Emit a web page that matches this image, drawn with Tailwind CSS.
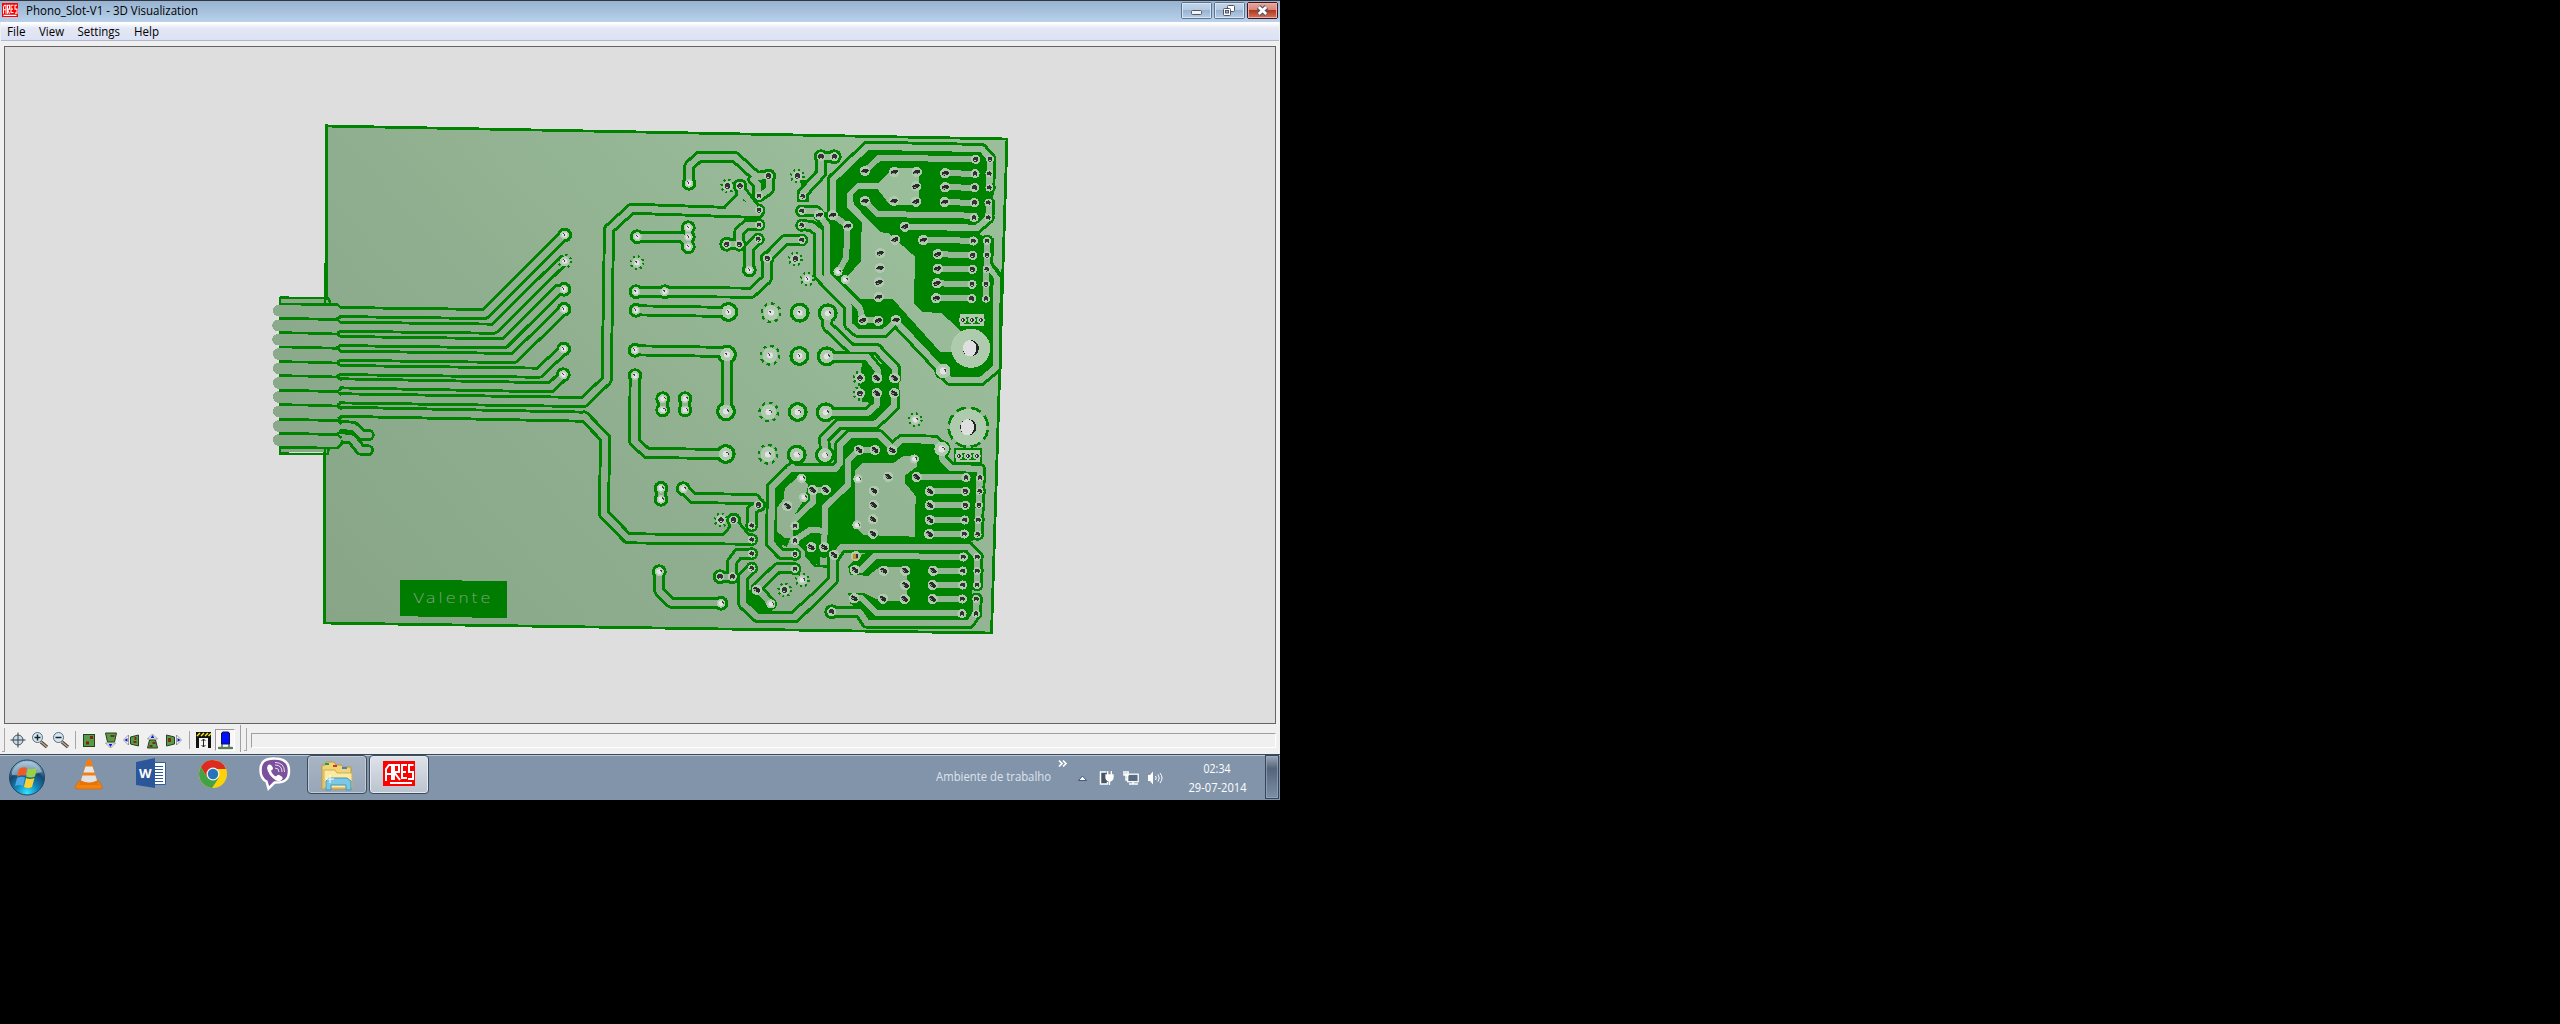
<!DOCTYPE html>
<html lang="pt">
<head>
<meta charset="utf-8">
<title>Phono_Slot-V1 - 3D Visualization</title>
<script src="https://cdn.jsdelivr.net/npm/@tailwindcss/browser@4"></script>
</head>
<body class="bg-black overflow-hidden">
<div class="w-[1280px] h-[800px] flex flex-col bg-[#f0f0f0] font-['Open_Sans','Noto_Sans',sans-serif] text-black overflow-hidden">
  <header class="h-[22px] shrink-0 border-t border-[#33373d] bg-linear-to-b from-[#97b3d1] to-[#b9d1ea] flex items-start">
    <svg class="ml-[2px] mt-[2px] shrink-0" width="16" height="14" viewBox="0 0 32 25" preserveAspectRatio="none"><rect width="32" height="25" fill="#f00"/><path d="M3 19V7l2-3h3v15M3 12h5M11 19V4h4v7h-4l4 8M23 4h-5v13h5M18 11h4M30 4h-4v7h4v7h-4M3 22h26" fill="none" stroke="#fff" stroke-width="2"/></svg>
    <h1 class="ml-[8px] shrink-0"><svg width="180" height="21" class="block"><text x="0" y="14" textLength="172" lengthAdjust="spacingAndGlyphs" font-size="12.5">Phono_Slot-V1 - 3D Visualization</text></svg></h1>
    <div class="ml-auto mr-[2px] mt-px flex gap-[2px]">
      <svg width="31" height="17"><defs><linearGradient id="wb" x2="0" y2="1"><stop stop-color="#c3d5e9"/><stop offset=".45" stop-color="#b4cae2"/><stop offset=".5" stop-color="#98b3d0"/><stop offset="1" stop-color="#b7d0ea"/></linearGradient><linearGradient id="wr" x2="0" y2="1"><stop stop-color="#e8a89d"/><stop offset=".45" stop-color="#d5887a"/><stop offset=".5" stop-color="#b5371f"/><stop offset="1" stop-color="#d17a62"/></linearGradient></defs><rect x=".5" y=".5" width="30" height="16" rx="1.5" fill="url(#wb)" stroke="#5d7392"/><rect x="1.5" y="1.5" width="28" height="14" fill="none" stroke="#d6e3f1"/><rect x="10.5" y="8.5" width="10" height="4" rx="1" fill="#f4f4f4" stroke="#535666"/></svg>
      <svg width="31" height="17"><rect x=".5" y=".5" width="30" height="16" rx="1.5" fill="url(#wb)" stroke="#5d7392"/><rect x="1.5" y="1.5" width="28" height="14" fill="none" stroke="#d6e3f1"/><rect x="13.500" y="3.500" width="7" height="6" rx="1" fill="#fff" stroke="#535666"/><rect x="9.500" y="6.500" width="7" height="7" rx="1" fill="#fff" stroke="#535666"/><rect x="11.500" y="8.500" width="3" height="2.500" fill="#9bb5d2" stroke="#535666"/></svg>
      <svg width="31" height="17"><rect x=".5" y=".5" width="30" height="16" rx="1.5" fill="url(#wr)" stroke="#43141b"/><rect x="1.5" y="1.5" width="28" height="14" fill="none" stroke="#e7b0a6"/><path d="M11.500 5l8 7M19.500 5l-8 7" stroke="#535666" stroke-width="5"/><path d="M11.800 5l7.400 7M19.200 5l-7.400 7" stroke="#fff" stroke-width="2.700"/></svg>
    </div>
  </header>
  <nav class="h-[19px] shrink-0 border-b border-[#b3b7cb] bg-linear-to-b from-white from-5% via-[#e4e8f4] via-35% to-[#dce2f6] mx-px">
    <svg width="180" height="18" class="block" font-size="12.5"><text x="6" y="14" textLength="18.500" lengthAdjust="spacingAndGlyphs">File</text><text x="38" y="14" textLength="25" lengthAdjust="spacingAndGlyphs">View</text><text x="76.500" y="14" textLength="42.500" lengthAdjust="spacingAndGlyphs">Settings</text><text x="133" y="14" textLength="25" lengthAdjust="spacingAndGlyphs">Help</text></svg>
  </nav>
  <main class="h-[678px] mt-[5px] ml-[4px] mr-[4px] shrink-0 border border-[#646464] bg-[#dedede] overflow-hidden">
    <svg id="board" class="block" width="1270" height="676" viewBox="5 47 1270 676" shape-rendering="crispEdges"></svg>
  </main>
  <section class="h-[30px] shrink-0 flex items-start pt-[3px]">
    <i class="block w-[3px] h-[24px] ml-[2px] mt-px border-r border-b border-[#a8a8a8]"></i>
    <div class="flex items-center h-[25px] ml-[2px]">
      <svg width="22" height="20" viewBox="-11 -10 22 20"><circle r="5" fill="#c9dce6" stroke="#44525c"/><path d="M-7.500 0h15M0-7.500v15" stroke="#35434c"/></svg>
      <svg width="22" height="20" viewBox="0 0 22 20"><path d="M12 12l6 5" stroke="#4c4035" stroke-width="3.500"/><path d="M12 12l6 5" stroke="#b7a58d" stroke-width="1.500"/><circle cx="8.500" cy="7.500" r="5" fill="#d3e8f3" stroke="#5b6c78"/><path d="M5.500 7.500h6M8.500 4.500v6" stroke="#17222a" stroke-width="1.500"/></svg>
      <svg width="22" height="20" viewBox="0 0 22 20"><path d="M11 12l6 5" stroke="#4c4035" stroke-width="3.500"/><path d="M11 12l6 5" stroke="#b7a58d" stroke-width="1.500"/><circle cx="7.500" cy="7.500" r="5" fill="#d3e8f3" stroke="#5b6c78"/><path d="M4.500 7.500h6" stroke="#17222a" stroke-width="1.500"/></svg>
      <i class="block w-px h-[18px] mx-[2px] bg-[#a5a5a5]"></i>
      <svg width="22" height="20" viewBox="-11 -10 22 20"><rect x="-5.500" y="-5.500" width="11" height="12" fill="#579b47" stroke="#24421f"/><path d="M1-2.500h3M-3 3h3" stroke="#8b1d16" stroke-width="3"/></svg>
      <svg width="21" height="20" viewBox="-10.500 -10 21 20"><path d="M-5-7H6L4 2h-7z" fill="#579b47" stroke="#24421f"/><path d="M0-4h4" stroke="#7d2a1b" stroke-width="2"/><path d="M-5 3h10L0 8z" fill="#fff" stroke="#737373" stroke-width=".7"/><path d="M-2 4h4L0 7z" fill="#0719d6"/></svg>
      <svg width="21" height="20" viewBox="-10.500 -10 21 20"><path d="M-1-3l8-2V6l-8-2z" fill="#579b47" stroke="#24421f"/><path d="M4-3v3M2 2h3" stroke="#7d2a1b" stroke-width="2"/><path d="M-3-5V5l-5-5z" fill="#fff" stroke="#737373" stroke-width=".7"/><path d="M-4-2v4L-7 0z" fill="#0719d6"/></svg>
      <svg width="21" height="20" viewBox="-10.500 -10 21 20"><path d="M-3 0h6l2 8H-5z" fill="#579b47" stroke="#24421f"/><path d="M0 3h3M-3 6h3" stroke="#7d2a1b" stroke-width="2"/><path d="M-5-1H5L0-6z" fill="#fff" stroke="#737373" stroke-width=".7"/><path d="M-2-2h4L0-5z" fill="#0719d6"/></svg>
      <svg width="21" height="20" viewBox="-10.500 -10 21 20"><path d="M1-3l-8-2V6l8-2z" fill="#579b47" stroke="#24421f"/><path d="M-4-2v4" stroke="#7d2a1b" stroke-width="3"/><path d="M3-5V5l5-5z" fill="#fff" stroke="#737373" stroke-width=".7"/><path d="M4-2v4L7 0z" fill="#0719d6"/></svg>
      <i class="block w-px h-[18px] ml-[5px] mr-[5px] bg-[#a5a5a5]"></i>
      <svg width="17" height="20" viewBox="0 0 17 20"><path d="M1 2h15v16h-3V8H4v10H1z" fill="#111"/><rect x="4" y="8" width="9" height="10" fill="#f4f4f4"/><path d="M2 6l3-3M6 6l3-3M10 6l3-3M13.500 6L16 3.500" stroke="#f3e516" stroke-width="1.500"/><path d="M8.500 9v8M6.500 11l2-2 2 2M6.500 15l2 2 2-2" stroke="#222" fill="none"/></svg>
      <span class="block w-[20px] h-[22px] ml-[3px] border border-r-white border-b-white border-[#9a9a9a] bg-[#f9f7f8]"><svg width="18" height="20"><path d="M5.500 4V3h1V2h6v1h1v11h-8z" fill="#0010ff" stroke="#10104b"/><path d="M6 14v3M13 14v3" stroke="#10104b"/><path d="M2.500 17.300h14v1.400h-14z" fill="#68a84d" stroke="#34602c" stroke-width=".8"/></svg></span>
    </div>
    <i class="block w-px h-[27px] -mt-[2px] ml-[5px] bg-[#a0a0a0]"></i>
    <i class="block w-[3px] h-[23px] ml-[3px] mt-px border-r border-b border-[#a8a8a8]"></i>
    <i class="block flex-1 h-[15px] ml-[4px] mr-[4px] mt-[6px] border-t border-l border-t-[#a0a0a0] border-l-[#a0a0a0] border-b border-r border-b-white border-r-white"></i>
  </section>
  <footer class="h-[46px] shrink-0 border-t border-[#37495b] bg-[#8294aa] shadow-[inset_0_1px_0_#b9c8d7] flex items-start text-white">
    <svg class="ml-[8px] mt-[2px] mr-[12px] shrink-0" width="38" height="40"><defs><radialGradient id="orb" cy=".95" r=".9"><stop stop-color="#36e5ff"/><stop offset=".35" stop-color="#1189bd"/><stop offset=".7" stop-color="#17476d"/><stop offset="1" stop-color="#8fb4cc"/></radialGradient></defs><circle cx="19" cy="20.500" r="17.500" fill="url(#orb)" stroke="#1e4568"/><path d="M4 15A16 16 0 0 1 34 15Q20 19 4 18z" fill="#c6dbe8" opacity=".55"/><g transform="translate(0 1)"><path d="M11 11q4-3 8-1l-2 8q-4-2-8 1z" fill="#f05a24"/><path d="M20 10.500q5 2 9-1l-2 9q-4 2-9 0z" fill="#9bd145"/><path d="M9 20q4-2 8-.5L15 28q-4-2-8 0z" fill="#4aa7e8"/><path d="M18 20q4 2 8.500 0l-2.500 9q-4 2-8 0z" fill="#ffd12e"/></g></svg>
    <div class="flex items-start">
      <span class="w-[62px] h-[38px] flex justify-center pt-[3px]"><svg width="30" height="34"><path d="M5 23L1 29q0 2 3 2h22q3 0 2-2l-3-6z" fill="#f5820d" stroke="#d56708" stroke-width=".8"/><path d="M5 27h20l-4-7H8z" fill="#e77405"/><path d="M13 2q2-2 4 0l6 20q-8 5-16 0z" fill="#f47f10"/><path d="M11.500 8.500h7l2 6h-11z" fill="#e5e8ea"/><path d="M8.500 17.500h13l1.500 5q-8 4-16 0z" fill="#dfe3e6"/></svg></span>
      <span class="w-[62px] h-[38px] flex justify-center pt-[3px]"><svg width="31" height="32"><path d="M17 4.500h12.500v22H17" fill="#fff" stroke="#355e9e"/><path d="M19 8.500h8M19 11.500h8M19 14.500h8M19 17.500h8M19 20.500h8M19 23.500h8" stroke="#2d589a"/><path d="M0 4L19 0v30L0 27z" fill="#2b579a"/><text x="9.300" y="20" text-anchor="middle" font-size="13" font-weight="700" fill="#fff">W</text></svg></span>
      <span class="w-[62px] h-[38px] flex justify-center pt-[4px]"><svg width="30" height="30" viewBox="-15 -15 30 30"><circle r="14" fill="#fcd209"/><path d="M-12.100-7A14 14 0 0 1 13-5H0L-6 3z" fill="#dc2b23"/><path d="M-12.100-7A14 14 0 0 0-1 14L6 3.500 0 6-6 3z" fill="#42a346"/><circle r="6.500" fill="#f2f2ef"/><circle r="5.200" fill="#2674ba"/></svg></span>
      <span class="w-[62px] h-[38px] flex justify-center pt-[2px]"><svg width="32" height="34"><path d="M16 1.500C5 1 1.500 6 1.500 13c0 5 1 9 6 11.500l2 7 6-6C27 26 30 21 30 14c0-8-4-12.500-14-12.500z" fill="#7b519d" stroke="#fff" stroke-width="2.500"/><path d="M9 8q3-2 5 3 0 2-2 2.500 1 4 5 6 2-3 4-1 4 2 2 4-2 3-6 1Q9 18 8 11z" fill="#fff"/><path d="M16 11q4 0 4 4M16 8q7 0 7 7M16 5.500q9.500 0 9.500 9.500" stroke="#e6dbef" fill="none"/></svg></span>
      <span class="w-[60px] h-[39px] ml-px rounded-sm border border-[#3d4b5b] bg-linear-to-b from-[#a8b5c4] to-[#97a6b8] shadow-[inset_0_0_0_1px_#c1cad5] flex justify-center pt-[4px]"><svg width="34" height="32"><path d="M2 9V5h3l1-3h8l2 3h6l1 2h8v22H2z" fill="#f0d477" stroke="#bf963f"/><path d="M4 10h11l2 3h15v15H4z" fill="#fbeaa1" stroke="#cfad51"/><path d="M5 4h4" stroke="#15a53a" stroke-width="2"/><path d="M13 6h4" stroke="#c43d28" stroke-width="2"/><path d="M22 8h5" stroke="#3687d6" stroke-width="2"/><path d="M6 30v-9l3-3h18l4 3v9h-5v-5H11v5z" fill="#7ac8e6" stroke="#4695bc"/><path d="M6 19h8M10 15v8" stroke="#fff"/></svg></span>
      <span class="w-[60px] h-[39px] ml-[2px] rounded-sm border border-[#3d4b5b] bg-linear-to-b from-[#dfe3e9] to-[#bac3cf] shadow-[inset_0_0_0_1px_#e6eaf0] flex justify-center pt-[5px]"><svg width="32" height="25"><rect width="32" height="25" fill="#f00"/><path d="M3 20V8l3-4h3v15M4 13h5M11 19V4h5v7h-5l6 8M24 4h-5v13h5M19 11h4M30.500 4H26v7h4v7h-5M7 22h22" fill="none" stroke="#fff" stroke-width="2"/></svg></span>
    </div>
    <svg class="ml-auto shrink-0" width="345" height="45">
      <text x="1" y="26" textLength="115" lengthAdjust="spacingAndGlyphs" font-size="12.500" fill="#dde3ea">Ambiente de trabalho</text>
      <path d="M124 5.500l3 3-3 3M128 5.500l3 3-3 3" fill="none" stroke="#fff" stroke-width="1.700"/>
      <path d="M143.500 25.500l4-4.500 4 4.500z" fill="#fff" stroke="#3c4a72" stroke-width=".9"/>
      <g transform="translate(164 16)"><path d="M7.500 1h-6v12h7v-2" fill="#485565" stroke="#fff" stroke-width="1.500"/><path d="M7 4h7v3q-1 3-3.500 3T7 7zM8.700 0v4M12.300 0v4M10.500 9v5" fill="#fff" stroke="#fff" stroke-width="1.300"/></g>
      <g transform="translate(188 16)"><rect x="4.700" y="3.200" width="10.500" height="7.500" fill="#5a6c81" stroke="#fff" stroke-width="1.300"/><path d="M6 13h9M10 11v2M1 0v4h4V0M3 0v9h2" fill="none" stroke="#fff" stroke-width="1.500"/></g>
      <g transform="translate(212 16)"><path d="M1 4h2l3-3.500v13L3 10H1z" fill="#fff"/><path d="M8.500 5q1.500 2 0 4M11 3.500q2.500 3.500 0 7M13 2q4 5 0 10" fill="none" stroke="#fff"/></g>
      <text x="268.500" y="18" textLength="27" lengthAdjust="spacingAndGlyphs" font-size="12.500" fill="#fff">02:34</text>
      <text x="253.500" y="37" textLength="58" lengthAdjust="spacingAndGlyphs" font-size="12.500" fill="#fff">29-07-2014</text>
      <defs><linearGradient id="sd" x2="0" y2="1"><stop stop-color="#9eabba"/><stop offset=".3" stop-color="#54657a"/><stop offset="1" stop-color="#7d90a7"/></linearGradient></defs>
      <rect x="330.500" y=".5" width="13" height="43" fill="url(#sd)" stroke="#35465a"/><rect x="331.500" y="1.500" width="11" height="41" fill="none" stroke="#a0adbc" opacity=".6"/>
    </svg>
  </footer>
</div>
<script>
// Panels of the board, each with its own origin; units are thirds of a pixel.
const O={A:[260,110],B:[580,130],C:[780,125],D:[580,380],E:[780,370]};
const P=(k,s)=>s.trim().split(/\s+/).map(q=>{const [x,y]=q.split(',').map(Number);return [O[k][0]+x/3,O[k][1]+y/3].map(v=>v.toFixed(1)).join(',')}).join(' ');
const G='#008300';
const poly=(k,s,f)=>`<polygon points="${P(k,s)}" fill="${f}"/>`;
const line=(k,s,c,w)=>`<polyline points="${P(k,s)}" fill="none" stroke="${c}" stroke-width="${w}" stroke-linejoin="round" stroke-linecap="round"/>`;
const BD='url(#bd)';

const fills=[
 ['C','150,160 258,52 605,58 642,98 642,205 600,330 642,340 640,415 632,460 635,720 595,750 505,750 345,605 310,630 232,632 200,595 200,545 112,450 112,300 118,262 150,260'],
 ['C','250,735 355,735 358,830 245,830'],
 ['E','245,-20 358,-15 358,75 343,110 290,180 180,180 230,140 275,110 240,70'],
 ['E','-10,325 40,275 160,300 190,215 290,205 335,245 370,218 460,220 500,300 612,300 612,500 570,515 180,515 165,555 130,565 110,555 70,540 30,500 0,420'],
 ['E','240,555 285,540 560,540 575,570 575,740 275,748 210,700 205,670 250,668 300,692 380,692 380,590 300,590 265,617 210,615 205,590'],
 ['D','500,635 520,625 580,675 575,705 540,705 500,670'],
 ['D','588,325 640,275 720,275 720,560 690,540 640,455 620,500 590,488'],
 ['B','660,150 690,150 690,165 665,170'],
];
// Bare areas inside the copper pours.
const opens=[
 ['C','202,205 232,175 295,175 340,130 418,130 418,240 330,240 293,193 235,193 219,210 221,238 300,321 326,325 405,395 402,535 425,560 485,565 545,620 520,680 480,680 338,522 243,522 190,470 205,450 243,410 245,292 202,247'],
 ['E','225,300 248,280 340,280 370,258 415,258 410,290 376,316 376,340 407,378 404,500 250,495 225,470'],
 ['E','58,318 14,355 12,385 -8,412 -8,485 15,505 40,505 40,440 75,385 85,345'],
];
// Tracks: panel and points.
const T=[
 ['A','235,606 674,612 912,376'],['A','235,650 702,656 905,456'],['A','235,693 733,700 893,540 912,540'],
 ['A','235,737 762,744 912,598'],['A','235,780 838,788 912,717'],['A','235,820 873,832 912,794'],
 ['A','235,865 972,876'],['A','235,905 972,920'],
 ['A','235,948 280,950 305,975 326,975'],['A','235,980 276,986 302,1019 324,1021'],
 ['B','12,816 80,750 87,298 155,236 535,249'],['B','445,240 482,203 482,168'],['B','482,180 530,242'],
 ['D','12,109 75,173 72,402 143,475 515,479'],['D','440,473 461,448 461,420'],['D','461,430 500,477'],
 ['B','327,160 328,108 356,81 465,81 530,140 566,138'],['B','535,198 535,165 520,148 530,140'],['B','566,138 566,180 538,198'],
 ['B','172,320 305,320 325,340'],['B','325,293 325,350'],
 ['B','537,285 500,285 478,305 478,343 440,343'],['B','535,328 508,352 508,420'],
 ['B','665,330 615,330 562,385 560,447 515,488 168,485'],
 ['B','168,541 445,546'],['B','165,661 440,666 440,840'],
 ['B','165,737 164,930'],['D','164,0 162,183 200,219 437,222'],
 ['D','248,56 248,90'],['D','315,56 315,90'],['D','243,325 243,358'],
 ['D','310,326 338,354 525,357 538,375 515,390 515,437'],
 ['D','515,521 475,521 457,545 457,590 420,590'],
 ['D','238,575 238,633 273,668 423,670'],
 ['D','515,565 490,590 490,672 533,712 640,712 702,655'],
 ['D','645,565 592,565 530,625 573,672'],
 ['D','645,523 605,523 573,490 576,320 637,262'],
 ['E','30,297 165,297 180,280 180,225 210,195 297,195 337,234 365,210 465,212 485,237 485,265 512,293 600,297 599,323 593,493'],
 ['C','123,95 163,95'],['C','123,95 123,145 68,205 68,214'],
 ['C','67,258 108,258 118,270 140,300 140,450 240,550 248,585'],
 ['C','65,300 95,303 118,322 118,452 208,545 208,600 232,620 312,622 347,588 490,740 508,764 602,766 647,728 650,455 621,420 621,348'],
 ['C','158,270 158,164 262,65 605,72 630,100 628,188'],
 ['C','628,233 625,280 592,308 374,306'],
 ['C','143,565 142,603 215,672 290,672 345,730 345,760'],['C','140,696 262,697 293,735 292,760'],
 ['E','137,129 262,130 290,105 290,70'],['E','135,255 133,205 175,163 285,163 343,108 343,70'],
 ['E','45,742 158,632 158,570 185,530 565,530 592,560 592,645'],
 ['E','590,687 588,730 568,760 260,758 240,727 155,725'],
];
// Tracks inside a pour, which need no outline.
const I=[
 ['C','255,138 298,98 587,103'],['C','496,145 585,146'],['C','496,187 585,188'],['C','494,231 583,234'],
 ['C','255,228 292,267 583,272'],['C','430,345 580,347'],['C','473,388 578,390'],['C','473,431 578,433'],['C','471,475 576,478'],['C','469,520 575,520'],
 ['C','158,270 203,303 198,400 175,440'],['C','248,585 295,587'],['C','618,430 618,520'],['C','621,348 618,520'],
 ['E','237,240 285,240'],['E','237,240 205,270 205,345 135,410 133,530'],['E','410,321 558,321'],['E','450,364 556,364'],['E','450,406 556,406'],['E','450,450 554,450'],['E','448,492 553,492'],
 ['E','98,360 137,360'],['E','100,360 100,395 42,450 45,468'],['E','45,510 90,480 133,482'],
 ['E','225,600 243,600 285,558 550,561'],['E','223,685 245,685 290,729 547,730'],['E','460,602 548,602'],['E','458,645 548,645'],['E','458,687 548,687'],
 ['E','599,323 593,493'],
];
// Pads. r: ringed, b: large ringed, t: thermal, u: large thermal, p: plain in a pour, s: small; the third field marks a shaded hole.
const pads=[
 ['A','r',0,'914,375 912,538 912,598 911,717 910,794'],['A','t',0,'914,454'],
 ['B','r',0,'327,160 172,320 325,293 325,321 325,350 508,420 168,485 254,485 168,541 165,661 165,737'],
 ['B','r',1,'566,138 480,168 478,343 440,343 562,385'],['B','t',1,'443,168 652,138 646,387'],['B','t',0,'171,398 682,447'],
 ['B','s',1,'537,198 537,241 537,285 535,328 665,243 665,286 665,330'],['B','b',0,'445,546 659,548 441,674 658,678'],['B','u',0,'573,548 570,676'],
 ['C','r',1,'123,95 163,95'],['C','q',1,'68,214'],
 ['C','s',1,'630,103 628,146 628,188 625,233 625,278 621,348 621,391 620,433 618,478 618,521'],
 ['C','b',0,'143,565 140,694'],
 ['C','p',1,'255,138 343,141 410,141 408,184 408,230 342,228 255,228 496,145 496,187 494,231 375,305 345,344 430,345 301,385 300,429 297,472 296,516 473,388 473,431 471,475 469,520 158,270 118,270 203,303 248,586 295,587 348,585'],
 ['C','m',1,'587,103 585,146 584,188 583,233 582,278 580,348 578,391 577,433 576,478 575,521'],['C','m',0,'174,440 196,464'],
 ['C','P',0,'490,738'],['C','t',1,'241,760'],['C','p',1,'292,760 345,760'],
 ['D','r',0,'248,56 248,90 315,56 315,90 243,325 243,358 310,326 238,575 423,670'],
 ['D','b',0,'438,94 437,222 653,96 650,224'],['D','u',0,'566,96 564,223'],
 ['D','r',1,'536,375 461,420 457,590 420,590'],['D','t',1,'423,420 614,630'],['D','t',0,'667,600'],
 ['D','s',1,'515,437 515,479 515,521 515,565 645,523 645,567'],['D','m',0,'665,295 671,352 573,672'],['D','p',1,'622,378 698,331 694,502 530,629'],['D','m',1,'645,438 645,482'],
 ['E','b',0,'137,127 135,255'],['E','t',1,'240,24 240,70'],['E','p',1,'290,24 343,24 290,70 343,70'],['E','t',0,'406,149'],
 ['E','p',1,'237,240 285,240 337,241 325,320 282,362 281,405 279,448 279,491 410,321 450,364 450,406 450,450 448,492 98,360 137,360 133,532 162,555 225,600 311,602 376,602 376,645 374,687 309,686 223,685 460,602 458,645 458,687'],
 ['E','r',1,'155,725'],
 ['E','m',0,'403,267 234,327 231,465'],['E','P',0,'485,237'],
 ['E','m',1,'558,323 556,364 556,406 554,450 553,492 550,561 548,603 548,645 547,687 546,731'],
 ['E','s',1,'600,323 599,364 597,406 595,450 593,493 592,561 592,603 591,645 589,687 588,731'],
];
const LP='#aecbae';
const size={r:[7.400,4.500,2.700],t:[7.300,5,2.700],b:[10,6.800,3],u:[10.300,7.500,3],s:[6.500,3.900,2.400],q:[6,3.800,2.400],p:[6.200,5.200,2.500],m:[5,4.600,2.500],P:[9,7.300,3.500]};
let h=`<defs><linearGradient id="bd" gradientUnits="userSpaceOnUse" x1="330" y1="620" x2="860" y2="160"><stop stop-color="#88a588"/><stop offset=".45" stop-color="#8fae8f"/><stop offset="1" stop-color="#9abd9a"/></linearGradient></defs>`;
h+=`<polygon points="279,298 326,298 326,126 1007,139 991,633 324,623 324,452 279,452" fill="${BD}"/><path d="M326.500 298V126L1007 139 991.500 633 324.500 623V452M326.500 124V210L325.500 300" fill="none" stroke="${G}" stroke-width="2.800"/>`;
for(const [k,s] of fills)h+=poly(k,s,G);
for(const [k,s] of T)h+=line(k,s,G,12);
const each=f=>{for(const [k,t,d,s] of pads)for(const q of s.split(' ')){const [x,y]=P(k,q).split(',').map(Number);f(t,d,x,y,size[t],k)}};
each((t,d,x,y,z)=>{if('rbs'.includes(t))h+=`<circle cx="${x}" cy="${y}" r="${z[0]}" fill="${G}"/>`;if(t=='q')h+=`<rect x="${x-6}" y="${y-6}" width="12" height="12" fill="${G}"/>`;if(t=='P')h+=`<circle cx="${x}" cy="${y}" r="9" fill="${G}"/>`});
for(const [k,s] of opens)h+=poly(k,s,BD);
for(const [k,s] of T)h+=line(k,s,BD,6.2);
h+=poly('B','450,243 482,205 530,245',BD)+poly('D','440,476 464,440 505,478',BD);
for(const [k,s] of I)h+=line(k,s,'#95b695',6);
each((t,d,x,y,z,k)=>{
 if(t=='t'||t=='u')h+=`<circle cx="${x}" cy="${y}" r="${z[0]-1}" fill="none" stroke="${G}" stroke-width="2.300" stroke-dasharray="${t=='u'?'3.300 4':'1.900 3.050'}"/>`;
 h+=`<circle cx="${x}" cy="${y}" r="${z[1]}" fill="${LP}"/>`;
 if(!d)h+=`<circle cx="${x}" cy="${y}" r="${z[2]+.3}" fill="#c9cfc9"/><circle cx="${x}" cy="${y}" r="${z[2]-.3}" fill="#e3e3e3"/><path d="M${x+(k=='A'||k=='B'?-1.500:1)} ${y-1.800}l1.300 1v1.500" fill="none" stroke="#444"/>`;
 else if(t=='p'){const a=k=='C'?-20:35;h+=`<g transform="rotate(${a} ${x} ${y})"><ellipse cx="${x}" cy="${y}" rx="3.700" ry="2.100" fill="#2a2a2a"/><path d="M${x-3} ${y+1}h3" stroke="#999"/></g>`}
 else h+=`<circle cx="${x}" cy="${y}" r="${z[2]}" fill="#333"/><path d="M${x-1.500} ${y+1.500}h2" stroke="#c8c8c8" stroke-width="1.200"/>`;
});
// Edge connector fingers.
[602,646,689,732,775,819,861,904,948,990].forEach((y,i)=>{h+=line('A',`${56-(i==1||i==2?2:0)},${y} 225,${y+3}`,BD,11.6)});
[625,668,711,755,797,841,884,928,970].forEach(y=>{h+=`<polyline points="${P('A',`57,${y} 130,${y+1} 230,${y+4}`)}" stroke="${G}" fill="none" stroke-width="2.700"/>`+line('A',`232,${y+4} 242,${y-5}`,G,2.5)+line('A',`232,${y+4} 242,${y+12}`,G,2.5)});
h+=line('A','59,582 232,584 245,594',G,2.5)+line('A','59,563 205,564 210,578',G,2.5)+line('A','60,563 60,582',G,2)+line('A','195,564 195,582',G,2.5);
h+=line('A','59,1012 232,1014 245,1001',G,2.5)+line('A','59,1031 203,1032 206,1016',G,2.5)+line('A','60,1013 60,1031',G,2)+line('A','195,1014 195,1031',G,2.5);
// Pour edges.
h+=line('E','77,530 80,560 105,587 146,590 148,610',G,2.4)+line('C','640,425 662,455',G,2.5);
// Mounting holes.
const hole=(k,x,y,r,d)=>{const [a,b]=P(k,x+','+y).split(',').map(Number);if(d)h+=`<circle cx="${a}" cy="${b}" r="19.500" fill="none" stroke="${G}" stroke-width="3" stroke-dasharray="10.300 5.015" stroke-dashoffset="-2.500"/>`;h+=`<circle cx="${a}" cy="${b}" r="${r}" fill="${LP}"/><circle cx="${a}" cy="${b}" r="8.200" fill="#222"/><ellipse cx="${a-1}" cy="${b}" rx="6.700" ry="8.200" fill="#dfdfdf"/>`};
hole('C',572,670,19.500,0);hole('E',565,172,18.300,1);
const conn=(k,x,y)=>{const [a,b]=P(k,x+','+y).split(',').map(Number);h+=`<rect x="${a-14}" y="${b-8}" width="28" height="16" fill="${G}"/><rect x="${a-12}" y="${b-6.300}" width="24" height="12.500" fill="${LP}"/><rect x="${a-9}" y="${b-3.500}" width="18" height="7" fill="${G}"/>`;for(const o of[-9,0,9])h+=`<circle cx="${a+o}" cy="${b}" r="3.700" fill="${LP}"/><circle cx="${a+o}" cy="${b}" r="1.700" fill="#333"/><circle cx="${a+o-.5}" cy="${b}" r="1" fill="#ddd"/>`};
conn('C',576,585);conn('E',564,258);
const [ox,oy]=P('E','227,558').split(',').map(Number);
h+=`<circle cx="${ox}" cy="${oy}" r="5" fill="${LP}"/><rect x="${ox-2.500}" y="${oy-2.500}" width="5" height="5" fill="#d18a22"/><rect x="${ox}" y="${oy-2}" width="2" height="4" fill="#333"/>`;
h+=`<polygon points="400,580 462,580 462,581 507,581 507,618 436,617 400,616" fill="#007c00"/><text x="413" y="603" textLength="80" lengthAdjust="spacingAndGlyphs" font-family="DejaVu Sans,sans-serif" font-weight="200" font-size="14" fill="#86a686" letter-spacing="2">Valente</text>`;
document.getElementById('board').innerHTML=h;
</script>
</body>
</html>
